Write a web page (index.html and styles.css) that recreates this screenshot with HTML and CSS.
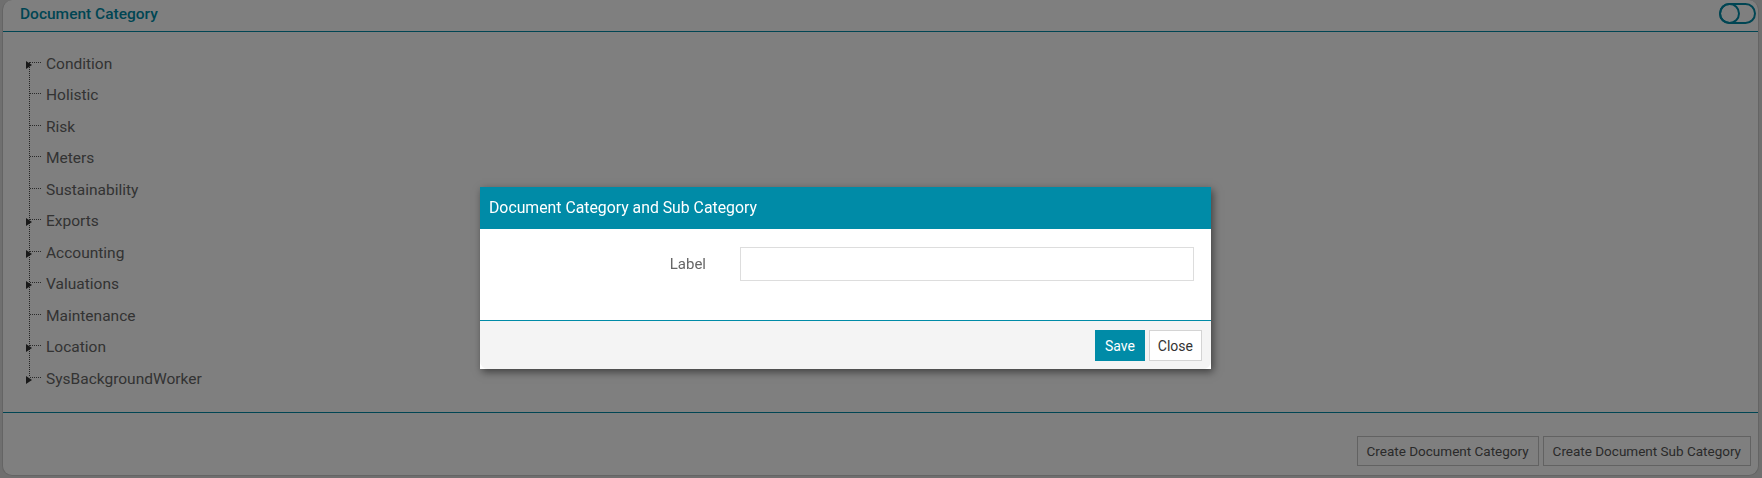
FILE: index.html
```html
<!DOCTYPE html>
<html lang="en">
<head>
    <meta charset="UTF-8">
    <meta name="viewport" content="width=device-width, initial-scale=1.0">
    <title>Document Category</title>
    <link rel="stylesheet" href="styles.css">
</head>
<body>
    <div class="panel">
        <div class="panel-header">
            <span class="panel-title">Document Category</span>
            <!-- Interruptor de vista -->
            <svg class="toggle" width="37" height="21" viewBox="0 0 37 21">
                <rect x="1" y="1" width="35" height="19" rx="9.5" fill="none" stroke="#008ba7" stroke-width="2"/>
                <circle cx="10.5" cy="10.5" r="9.5" fill="none" stroke="#008ba7" stroke-width="2"/>
            </svg>
        </div>

        <div class="panel-body">
            <ul class="tree">
                <li class="has-children">Condition</li>
                <li>Holistic</li>
                <li>Risk</li>
                <li>Meters</li>
                <li>Sustainability</li>
                <li class="has-children">Exports</li>
                <li class="has-children">Accounting</li>
                <li class="has-children">Valuations</li>
                <li>Maintenance</li>
                <li class="has-children">Location</li>
                <li class="has-children">SysBackgroundWorker</li>
            </ul>
        </div>

        <div class="panel-footer">
            <button class="btn">Create Document Category</button>
            <button class="btn">Create Document Sub Category</button>
        </div>
    </div>

    <!-- Fondo oscuro del diálogo -->
    <div class="backdrop"></div>

    <div class="modal">
        <div class="modal-header">Document Category and Sub Category</div>
        <div class="modal-body">
            <div class="form-row">
                <label for="label">Label</label>
                <input type="text" id="label">
            </div>
        </div>
        <div class="modal-footer">
            <button class="btn btn-primary">Save</button>
            <button class="btn btn-light">Close</button>
        </div>
    </div>
</body>
</html>
```

FILE: styles.css
```css
/* Página */
body {
    margin: 0;
    background-color: #dedede;
    font-family: Roboto, "Liberation Sans", Arial, sans-serif;
    color: #666;
}

/* Panel principal */
.panel {
    margin: 0 3px 2px 2px;
    height: 476px;
    box-sizing: border-box;
    background-color: #fff;
    border: 1px solid #c8c8c8;
    border-top: none;
    border-radius: 10px;
    display: flex;
    flex-direction: column;
}

.panel-header {
    height: 31px;
    border-bottom: 1px solid #008ba7;
    display: flex;
    align-items: center;
    justify-content: space-between;
    padding: 0 2px 0 17px;
    flex-shrink: 0;
}

.panel-title {
    color: #008ba7;
    font-size: 15.5px;
    font-weight: 500;
    padding-bottom: 4px;
}

.toggle {
    margin-top: -5px;
}

.panel-body {
    flex: 1;
    padding: 16.5px 0 0 0;
    border-bottom: 1px solid #008ba7;
}

/* Árbol de categorías */
.tree {
    list-style: none;
    margin: 0;
    padding: 0 0 0 43px;
    position: relative;
}

.tree::before {
    content: "";
    position: absolute;
    left: 26px;
    top: 13px;
    bottom: 19px;
    border-left: 1px dotted #444;
}

.tree li {
    position: relative;
    height: 31.5px;
    line-height: 31.5px;
    font-size: 15.5px;
    color: #666;
}

.tree li::before {
    content: "";
    position: absolute;
    left: -16px;
    top: 13px;
    width: 11px;
    border-top: 1px dotted #555;
}

.tree li.has-children::after {
    content: "";
    position: absolute;
    left: -20px;
    top: 12px;
    border-left: 6px solid #333;
    border-top: 4px solid transparent;
    border-bottom: 4px solid transparent;
}

.panel-footer {
    height: 62px;
    box-sizing: border-box;
    padding: 23px 7px 0 0;
    display: flex;
    justify-content: flex-end;
    align-items: flex-start;
    gap: 4px;
    flex-shrink: 0;
}

/* Botones */
.btn {
    font-family: inherit;
    font-size: 13.5px;
    height: 30px;
    padding: 0 9px;
    background-color: #fff;
    color: #555;
    border: 1px solid #c4c4c4;
    cursor: pointer;
}

.btn-primary {
    font-size: 14px;
    background-color: #008ba7;
    border-color: #008ba7;
    color: #fff;
    height: 31px;
}

.btn-light {
    font-size: 14px;
    background-color: #fff;
    border-color: #d4d4d4;
    color: #333;
    height: 31px;
    padding: 0 8px;
}

/* Diálogo */
.backdrop {
    position: fixed;
    inset: 0;
    background-color: rgba(0, 0, 0, 0.5);
}

.modal {
    position: absolute;
    top: 187px;
    left: 480px;
    width: 731px;
    background-color: #fff;
    box-shadow: 2px 3px 8px rgba(0, 0, 0, 0.5);
}

.modal-header {
    height: 42px;
    line-height: 42px;
    padding: 0 9px;
    background-color: #008ba7;
    color: #fff;
    font-size: 15.8px;
}

.modal-body {
    height: 92px;
    box-sizing: border-box;
    padding: 18px 17px 0 16px;
    border-bottom: 1px solid #008ba7;
}

.form-row {
    display: grid;
    grid-template-columns: 210px 1fr;
    column-gap: 34px;
    align-items: center;
}

.form-row label {
    text-align: right;
    font-size: 15px;
    color: #666;
}

.form-row input {
    height: 34px;
    box-sizing: border-box;
    border: 1px solid #ddd;
    padding: 6px 10px;
    font-size: 14px;
}

.modal-footer {
    height: 48px;
    box-sizing: border-box;
    padding: 9px 9px 0 0;
    background-color: #f4f4f4;
    border-radius: 0 0 8px 8px;
    display: flex;
    justify-content: flex-end;
    align-items: flex-start;
    gap: 4px;
}
```
